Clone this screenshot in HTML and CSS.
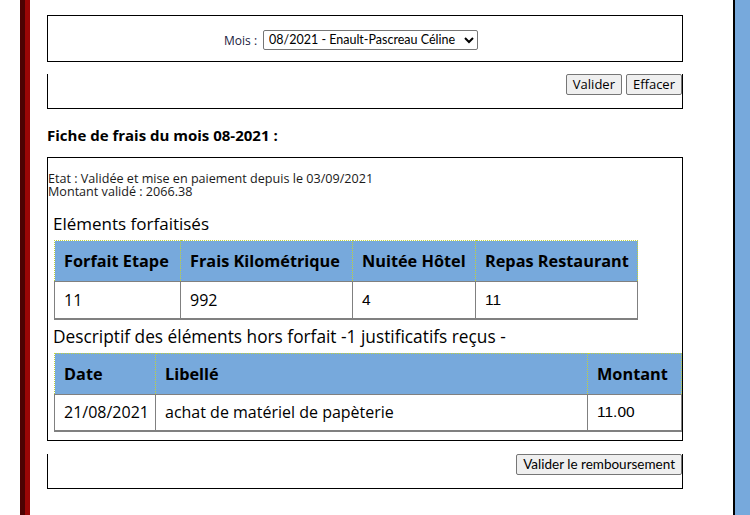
FILE: index.html
```html
<!DOCTYPE html>
<html lang="fr">
<head>
<meta charset="utf-8">
<title>Fiche de frais</title>
<link rel="stylesheet" href="styles.css">
</head>
<body>
<div class="page">
  <div class="left-bar"></div>
  <main class="content">
    <form class="box box-top">
      <label class="mois-label" for="mois">Mois :</label>
      <select id="mois" class="mois-select">
        <option>08/2021 - Enault-Pascreau Céline</option>
      </select>
    </form>
    <div class="box box-open">
      <button class="btn" type="button">Valider</button>
      <button class="btn" type="button">Effacer</button>
    </div>

    <h3 class="fiche-title">Fiche de frais du mois 08-2021 :</h3>

    <div class="box box-fiche">
      <p class="info"><span class="info-line">Etat : Validée et mise en paiement depuis le 03/09/2021</span><span class="info-line">Montant validé : 2066.38</span></p>

      <h4 class="section-title">Eléments forfaitisés</h4>
      <table class="grid grid-forfait">
        <thead>
          <tr>
            <th class="c1">Forfait Etape</th>
            <th class="c2">Frais Kilométrique</th>
            <th class="c3">Nuitée Hôtel</th>
            <th class="c4">Repas Restaurant</th>
          </tr>
        </thead>
        <tbody>
          <tr>
            <td>11</td>
            <td>992</td>
            <td class="num">4</td>
            <td class="num">11</td>
          </tr>
        </tbody>
      </table>

      <h4 class="section-title section-title-2">Descriptif des éléments hors forfait -1 justificatifs reçus -</h4>
      <table class="grid grid-hors">
        <thead>
          <tr>
            <th class="d1">Date</th>
            <th class="d2">Libellé</th>
            <th class="d3">Montant</th>
          </tr>
        </thead>
        <tbody>
          <tr>
            <td>21/08/2021</td>
            <td>achat de matériel de papèterie</td>
            <td class="num">11.00</td>
          </tr>
        </tbody>
      </table>
    </div>

    <div class="box box-open box-last">
      <button class="btn btn-wide" type="button">Valider le remboursement</button>
    </div>
  </main>
  <div class="right-bar"></div>
</div>
</body>
</html>
```

FILE: styles.css
```css
html, body {
  margin: 0;
  padding: 0;
  background: #ffffff;
}

body {
  font-family: "Open Sans", "Lato", sans-serif;
  color: #000;
  width: 750px;
  height: 515px;
  overflow: hidden;
}

.page {
  display: flex;
  height: 515px;
}

.left-bar {
  margin-left: 20px;
  width: 5px;
  border-left: 5px solid #4c0202;
  background: #9a0606;
  flex: none;
}

.content {
  margin-left: 17px;
  width: 636px;
  flex: none;
}

.right-bar {
  margin-left: 50px;
  width: 15px;
  border-left: 2px solid #000;
  background: #77a9dc;
  flex: none;
}

.box {
  box-sizing: border-box;
  border: 1px solid #000;
}

.box-top {
  margin: 15px 0 0 0;
  height: 47px;
  display: flex;
  justify-content: flex-start;
  align-items: center;
  gap: 6px;
  padding-left: 176px;
}

.mois-label {
  font-size: 12px;
  color: #1a1a40;
  padding-top: 3px;
}

.mois-select {
  width: 215px;
  height: 20px;
  font-family: "Lato", sans-serif;
  font-size: 12.5px;
  border: 1px solid #767676;
  border-radius: 2px;
  background: #fff;
  color: #000;
  padding: 0 0 0 1px;
  margin-top: 2px;
}

.box-open {
  border-top: none;
  margin-top: 12px;
  height: 35px;
  display: flex;
  justify-content: flex-end;
  align-items: flex-start;
  gap: 4px;
}

.btn {
  font-family: "Open Sans", sans-serif;
  font-size: 13px;
  height: 21px;
  padding: 0 6px;
  border: 1px solid #767676;
  border-radius: 2px;
  background: #efefef;
  color: #000;
  line-height: 19px;
}

.btn-wide {
  font-family: "Lato", sans-serif;
  font-size: 13.5px;
}

.fiche-title {
  margin: 17px 0 0 0;
  font-size: 15px;
  font-weight: bold;
  line-height: 18px;
}

.box-fiche {
  margin-top: 13px;
  height: 284px;
  padding: 0;
}

.info {
  margin: 14px 0 0 0;
  font-size: 12.6px;
  line-height: 13px;
  color: #1a1a1a;
}

.info-line {
  display: block;
  height: 13px;
}

.section-title {
  margin: 16px 0 6px 5px;
  font-size: 17px;
  font-weight: normal;
  line-height: 20px;
}

.section-title-2 {
  margin-top: 7px;
  font-size: 17.3px;
}

.grid {
  border-collapse: collapse;
  margin-left: 6px;
  table-layout: fixed;
}

.grid-forfait {
  width: 583px;
}

.grid-hors {
  width: 627px;
}

.grid th,
.grid td {
  box-sizing: border-box;
  padding: 0 9px;
  white-space: nowrap;
  text-align: left;
}

.grid th {
  background: #77a9dc;
  border: 1px dotted #c2d23a;
  height: 41px;
  font-size: 16.3px;
  font-weight: bold;
}

.grid td {
  border: 1px solid #808080;
  border-bottom: 2px solid #808080;
  height: 37px;
  font-size: 16px;
}

.grid td.num {
  font-family: "Liberation Sans", Arial, sans-serif;
  font-size: 15.5px;
}

.c1 { width: 126px; }
.c2 { width: 172px; }
.c3 { width: 123px; }
.c4 { width: 162px; }

.d1 { width: 101px; }
.d2 { width: 432px; }
.d3 { width: 94px; }

.box-last {
  margin-top: 13px;
}
```
